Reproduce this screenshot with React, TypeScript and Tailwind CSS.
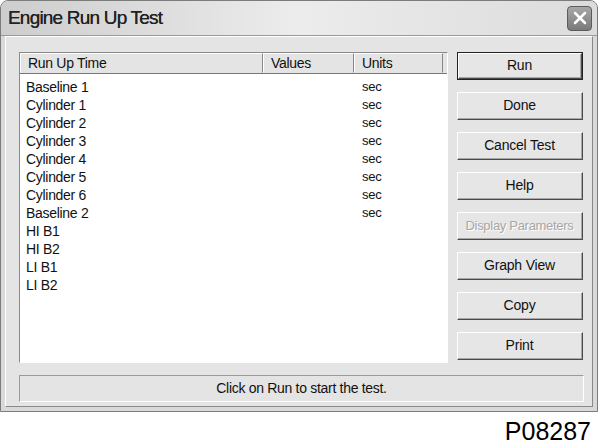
import { X } from 'lucide-react';

const rows = [
  { name: 'Baseline 1', units: 'sec' },
  { name: 'Cylinder 1', units: 'sec' },
  { name: 'Cylinder 2', units: 'sec' },
  { name: 'Cylinder 3', units: 'sec' },
  { name: 'Cylinder 4', units: 'sec' },
  { name: 'Cylinder 5', units: 'sec' },
  { name: 'Cylinder 6', units: 'sec' },
  { name: 'Baseline 2', units: 'sec' },
  { name: 'HI B1', units: '' },
  { name: 'HI B2', units: '' },
  { name: 'LI B1', units: '' },
  { name: 'LI B2', units: '' },
];

const buttons = [
  { label: 'Run', isDefault: true },
  { label: 'Done' },
  { label: 'Cancel Test' },
  { label: 'Help' },
  { label: 'Display Parameters', disabled: true },
  { label: 'Graph View' },
  { label: 'Copy' },
  { label: 'Print' },
];

function DialogButton({ label, isDefault, disabled }: { label: string; isDefault?: boolean; disabled?: boolean }) {
  const face = (
    <div className="flex h-full w-full items-center justify-center border border-t-white border-l-white border-r-[#4a4a4a] border-b-[#4a4a4a] bg-[#e6e6e6]">
      <div className="flex h-full w-full items-center justify-center border-r border-b border-[#a8a8a8]">
        {disabled ? (
          <span className="text-[13px] tracking-[-0.3px] text-[#a6a6a6] [text-shadow:1px_1px_0_#ffffff]">{label}</span>
        ) : (
          <span className="text-[14px] tracking-[-0.2px] text-[#111]">{label}</span>
        )}
      </div>
    </div>
  );
  return (
    <div className={`h-[28px] w-[126px] ${isDefault ? 'border border-[#222]' : ''}`}>
      {face}
    </div>
  );
}

export default function App() {
  return (
    <div className="h-[444px] w-[600px] bg-white font-['Liberation_Sans',Arial,sans-serif] text-[#111]">
      <div className="flex h-[412px] w-[598px] flex-col rounded-t-[8px] border border-[#7c7c7c] bg-[#d9d9d9]">
        {/* Title bar */}
        <div className="flex h-[35px] items-center justify-between rounded-t-[7px] border-b border-[#9a9a9a] bg-gradient-to-r from-[#cdcdcd] via-[#ececec] to-[#dcdcdc] pl-[7px] pr-[5px]">
          <span className="text-[19px] tracking-[-0.8px] text-[#222] [text-shadow:0_0_0.4px_#222]">Engine Run Up Test</span>
          <div className="flex h-[25px] w-[25px] items-center justify-center rounded-[4px] border border-[#5c5c5c] bg-gradient-to-b from-[#a8a8a8] to-[#7a7a7a]">
            <X className="h-[20px] w-[20px] text-white" strokeWidth={3} />
          </div>
        </div>

        {/* Client area */}
        <div className="mx-[4px] mb-[4px] flex flex-1 flex-col border border-t-white border-l-white border-r-[#8a8a8a] border-b-[#8a8a8a] bg-[#e4e4e4] pl-[13px] pt-[15px]">
          <div className="flex gap-[9px]">
            {/* List view */}
            <div className="flex h-[311px] w-[429px] flex-col border border-t-[#8a8a8a] border-l-[#8a8a8a] border-r-white border-b-white bg-white">
              <div className="flex h-[21px] border-b border-[#777] bg-[#e4e4e4] text-[14px] tracking-[-0.3px]">
                <div className="flex w-[243px] items-center border border-t-white border-l-white border-r-[#888] border-b-transparent pl-[7px]">Run Up Time</div>
                <div className="flex w-[91px] items-center border border-t-white border-l-white border-r-[#888] border-b-transparent pl-[7px]">Values</div>
                <div className="flex w-[89px] items-center border border-t-white border-l-white border-r-[#888] border-b-transparent pl-[7px]">Units</div>
              </div>
              <div className="flex flex-col pt-[4px] text-[14px] leading-[18px] tracking-[-0.3px]">
                {rows.map((r) => (
                  <div key={r.name} className="flex">
                    <div className="w-[342px] pl-[6px]">{r.name}</div>
                    <div className="text-[13px]">{r.units}</div>
                  </div>
                ))}
              </div>
            </div>

            {/* Buttons */}
            <div className="flex flex-col gap-[12px]">
              {buttons.map((b) => (
                <DialogButton key={b.label} label={b.label} isDefault={b.isDefault} disabled={b.disabled} />
              ))}
            </div>
          </div>

          {/* Status bar */}
          <div className="mt-[12px] flex h-[27px] w-[565px] items-center justify-center border border-t-[#9a9a9a] border-l-[#9a9a9a] border-r-white border-b-white text-[14px] tracking-[-0.3px]">
            Click on Run to start the test.
          </div>
        </div>
      </div>
      <div className="flex justify-end pr-[9px] pt-[5px] text-[25px] leading-[28px] text-black">P08287</div>
    </div>
  );
}
